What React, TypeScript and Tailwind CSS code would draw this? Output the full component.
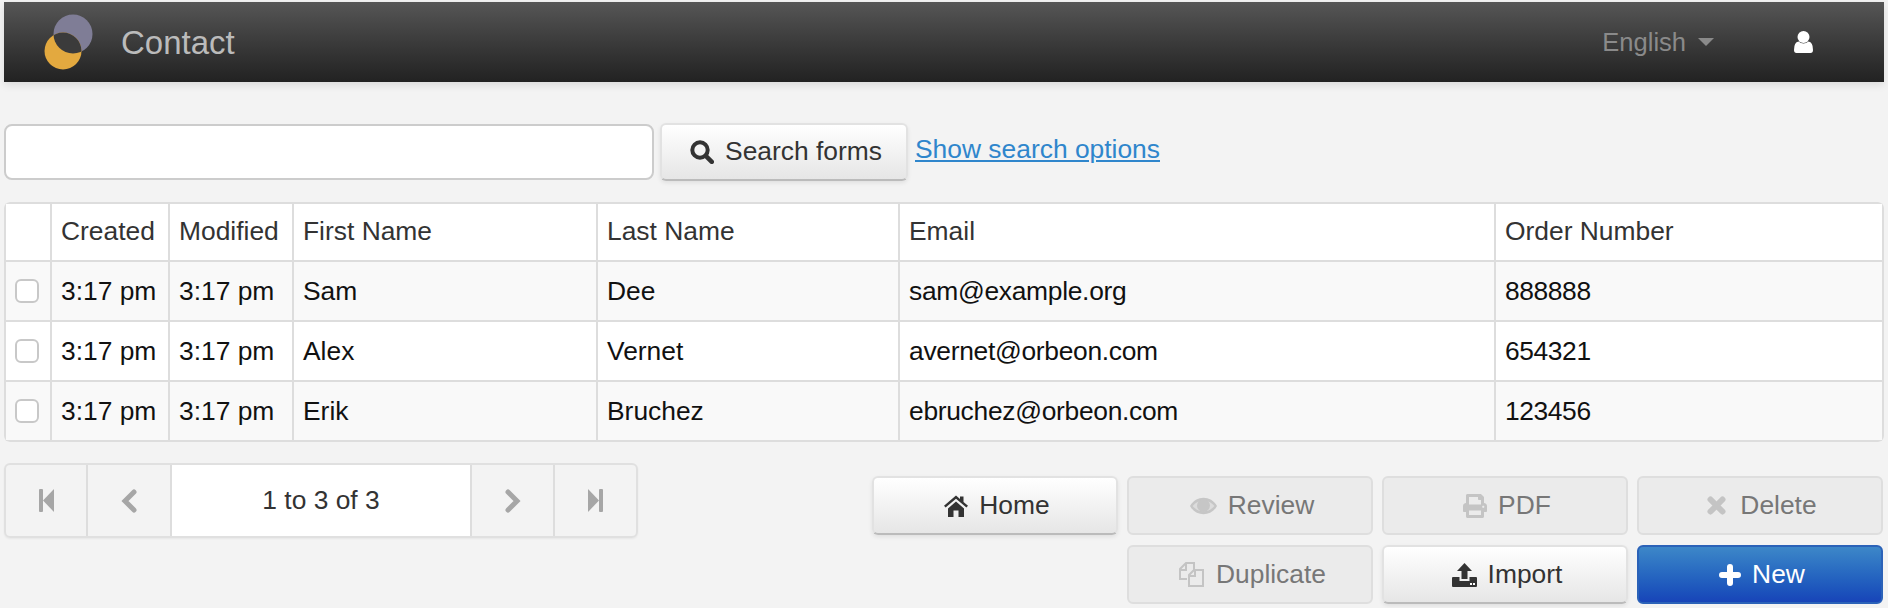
import React from "react";
import { FaPrint } from "react-icons/fa";

const rows = [
  { first: "Sam", last: "Dee", email: "sam@example.org", order: "888888" },
  { first: "Alex", last: "Vernet", email: "avernet@orbeon.com", order: "654321" },
  { first: "Erik", last: "Bruchez", email: "ebruchez@orbeon.com", order: "123456" },
];

const Logo = () => (
  <svg width="50" height="56" viewBox="0 0 50 56">
    <defs>
      <clipPath id="purple-clip">
        <circle cx="29" cy="20" r="19.5" />
      </clipPath>
    </defs>
    <circle cx="29" cy="20" r="19.5" fill="#7f7d96" />
    <circle cx="19" cy="37" r="18.5" fill="#e3a93f" />
    <circle cx="19" cy="37" r="18.5" fill="#3b3b3b" clipPath="url(#purple-clip)" />
  </svg>
);

const UserIcon = () => (
  <svg width="19" height="22" viewBox="0 0 19 22" fill="#fff">
    <circle cx="9.5" cy="6" r="6" />
    <path d="M2.5 22 Q0 22 0 19 Q0 11 4.5 10.5 Q9.5 14.5 14.5 10.5 Q19 11 19 19 Q19 22 16.5 22 Z" />
  </svg>
);

const SearchIcon = () => (
  <svg width="24" height="24" viewBox="0 0 24 24" fill="none" stroke="#333">
    <circle cx="10" cy="10" r="7.7" strokeWidth="4" />
    <path d="M15.8 15.8 L21.8 21.8" strokeWidth="4.5" strokeLinecap="round" />
  </svg>
);

const StepIcon = ({ flip }: { flip?: boolean }) => (
  <svg width="15" height="23" viewBox="0 0 15 23" fill="#a6a6a6" className={flip ? "-scale-x-100" : ""}>
    <rect x="0" y="0" width="4" height="23" rx="1" />
    <path d="M4 11.5 L15 0 V23 Z" />
  </svg>
);

const ChevronIcon = ({ flip }: { flip?: boolean }) => (
  <svg width="16" height="24" viewBox="0 0 16 24" fill="none" stroke="#a6a6a6" strokeWidth="5" strokeLinecap="round" className={flip ? "-scale-x-100" : ""}>
    <path d="M13 3 L4 12 L13 21" />
  </svg>
);

const HomeIcon = () => (
  <svg width="24" height="22" viewBox="0 0 24 22" fill="#333">
    <path d="M12 0.5 L0 10.8 L1.6 12.6 L12 3.8 L22.4 12.6 L24 10.8 L19.5 7 V1.5 H16 V4 Z" />
    <path d="M4 13.5 L12 6.5 L20 13.5 V22 H14.5 V15.5 H9.5 V22 H4 Z" />
  </svg>
);

const EyeIcon = () => (
  <svg width="27" height="18" viewBox="0 0 27 18">
    <path d="M0 9 C6 -2 21 -2 27 9 C21 20 6 20 0 9 Z" fill="#c6c6c6" />
    <path d="M2.6 9 C8 2 19 2 24.4 9 C19 16 8 16 2.6 9 Z" fill="#dcdcdc" />
    <circle cx="13.5" cy="8.5" r="6.5" fill="#c6c6c6" />
  </svg>
);

const CrossIcon = () => (
  <svg width="19" height="19" viewBox="0 0 19 19" stroke="#c4c4c4" strokeWidth="6" strokeLinecap="round" className="mr-[3px]">
    <path d="M3.5 3.5 L15.5 15.5 M15.5 3.5 L3.5 15.5" />
  </svg>
);

const PlusIcon = () => (
  <svg width="22" height="22" viewBox="0 0 22 22" stroke="#fff" strokeWidth="6" strokeLinecap="round">
    <path d="M11 3 V19 M3 11 H19" />
  </svg>
);

const DuplicateIcon = () => (
  <svg width="27" height="27" viewBox="0 0 27 27" fill="none" stroke="#c4c4c4" strokeWidth="2">
    <path d="M9 18H2V8l6-6h8v7" />
    <path d="M2 9h6V3" />
    <path d="M11 25V14l5-5h9v16z" />
    <path d="M11 15h6V9" />
  </svg>
);

const ImportIcon = () => (
  <svg width="25" height="24" viewBox="0 0 25 24" fill="#333">
    <path d="M12.5 0 L20 8 H15.5 V16 H9.5 V8 H5 Z" />
    <path d="M1 14 H7.5 V18 H17.5 V14 H24 A1 1 0 0 1 25 15 V23 A1 1 0 0 1 24 24 H1 A1 1 0 0 1 0 23 V15 A1 1 0 0 1 1 14 Z" />
    <rect x="18" y="20" width="2" height="2" fill="#fff" />
    <rect x="21" y="20" width="2" height="2" fill="#fff" />
  </svg>
);

type ActionProps = {
  icon: React.ReactNode;
  label: string;
  kind: "normal" | "disabled" | "primary";
};

const Action = ({ icon, label, kind }: ActionProps) => {
  let cls = "border-2 border-[#e2e2e2] bg-linear-to-b from-white to-[#e6e6e6] text-[#333] border-b-[#bbb] shadow-[0_2px_4px_rgba(0,0,0,0.08)]";
  if (kind === "disabled") {
    cls = "border-2 border-[#dedede] bg-[#ebebeb] text-[#777]";
  }
  if (kind === "primary") {
    cls = "border-2 border-[#2b62b8] bg-linear-to-b from-[#3d87c8] to-[#1844b8] text-white";
  }
  return (
    <button className={`flex h-[59px] w-full items-center justify-center gap-[11px] rounded-md pl-1 ${cls}`}>
      {icon}
      <span>{label}</span>
    </button>
  );
};

export default function App() {
  return (
    <div className="h-[608px] w-[1888px] overflow-hidden bg-[#f3f3f3] px-1 pt-0.5 font-['Liberation_Sans',Arial,sans-serif] text-[26.4px] text-[#333]">
      <header className="flex h-20 items-center justify-between bg-linear-to-b from-[#565656] to-[#222] pl-10 shadow-[0_3px_8px_rgba(0,0,0,0.1)]">
        <div className="flex items-center gap-[27px]">
          <Logo />
          <span className="pt-px text-[33px] text-[#bbb]">Contact</span>
        </div>
        <div className="flex items-center">
          <span className="text-[25.5px] text-[#8a8a8a]">English</span>
          <span className="ml-3 h-0 w-0 border-x-[8px] border-t-[8px] border-x-transparent border-t-[#8a8a8a]"></span>
          <span className="mr-[71px] ml-[80px] flex">
            <UserIcon />
          </span>
        </div>
      </header>

      <div className="mt-[41px] flex items-center">
        <input type="text" className="h-14 w-[650px] rounded-lg border-2 border-[#ccc] bg-white" />
        <button className="ml-1.5 flex h-[58px] w-[248px] items-center justify-center gap-[11px] rounded-md border-2 border-[#e2e2e2] border-b-[#bbb] bg-linear-to-b from-white to-[#e6e6e6] pl-1 shadow-[0_2px_4px_rgba(0,0,0,0.08)]">
          <SearchIcon />
          Search forms
        </button>
        <a href="#" className="mb-1 ml-[7px] text-[#2f86cc] underline">
          Show search options
        </a>
      </div>

      <table className="mt-[21px] w-[1880px] table-fixed border-collapse overflow-hidden rounded-md bg-white">
        <colgroup>
          <col className="w-[46px]" />
          <col className="w-[118px]" />
          <col className="w-[124px]" />
          <col className="w-[304px]" />
          <col className="w-[302px]" />
          <col className="w-[596px]" />
          <col />
        </colgroup>
        <thead>
          <tr className="h-[58px]">
            {["", "Created", "Modified", "First Name", "Last Name", "Email", "Order Number"].map((h, i) => (
              <th key={i} className="border-2 border-[#ddd] px-[9px] text-left font-normal">
                {h}
              </th>
            ))}
          </tr>
        </thead>
        <tbody className="text-[#111]">
          {rows.map((r, i) => (
            <tr key={r.email} className={`h-[60px] ${i % 2 === 0 ? "bg-[#f9f9f9]" : "bg-white"}`}>
              <td className="border-2 border-[#ddd] pl-[9px]">
                <div className="h-6 w-6 rounded-md border-2 border-[#c8c8c8] bg-white"></div>
              </td>
              <td className="border-2 border-[#ddd] px-[9px] pt-0.5">3:17 pm</td>
              <td className="border-2 border-[#ddd] px-[9px] pt-0.5">3:17 pm</td>
              <td className="border-2 border-[#ddd] px-[9px] pt-0.5">{r.first}</td>
              <td className="border-2 border-[#ddd] px-[9px] pt-0.5">{r.last}</td>
              <td className="border-2 border-[#ddd] px-[9px] pt-0.5 tracking-[-0.3px]">{r.email}</td>
              <td className="border-2 border-[#ddd] px-[9px] pt-0.5 tracking-[-0.4px]">{r.order}</td>
            </tr>
          ))}
        </tbody>
      </table>

      <div className="mt-[21px] flex items-start justify-between">
        <div className="flex h-[75px] w-[634px] rounded-md border-2 border-[#e0e0e0] shadow-[0_1px_2px_rgba(0,0,0,0.05)]">
          <div className="flex w-[82px] items-center justify-center border-r-2 border-[#ddd]">
            <StepIcon />
          </div>
          <div className="flex w-[84px] items-center justify-center border-r-2 border-[#ddd]">
            <ChevronIcon />
          </div>
          <div className="flex w-[298px] items-center justify-center bg-white">1 to 3 of 3</div>
          <div className="flex w-[85px] items-center justify-center border-x-2 border-[#ddd]">
            <ChevronIcon flip />
          </div>
          <div className="flex flex-1 items-center justify-center">
            <StepIcon flip />
          </div>
        </div>

        <div className="mt-[13px] mr-px grid w-[1011px] grid-cols-4 gap-x-[9px] gap-y-[10px]">
          <Action kind="normal" label="Home" icon={<HomeIcon />} />
          <Action kind="disabled" label="Review" icon={<EyeIcon />} />
          <Action kind="disabled" label="PDF" icon={<FaPrint className="text-[24px] text-[#c4c4c4]" />} />
          <Action kind="disabled" label="Delete" icon={<CrossIcon />} />
          <div className="col-start-2">
            <Action kind="disabled" label="Duplicate" icon={<DuplicateIcon />} />
          </div>
          <Action kind="normal" label="Import" icon={<ImportIcon />} />
          <Action kind="primary" label="New" icon={<PlusIcon />} />
        </div>
      </div>
    </div>
  );
}
